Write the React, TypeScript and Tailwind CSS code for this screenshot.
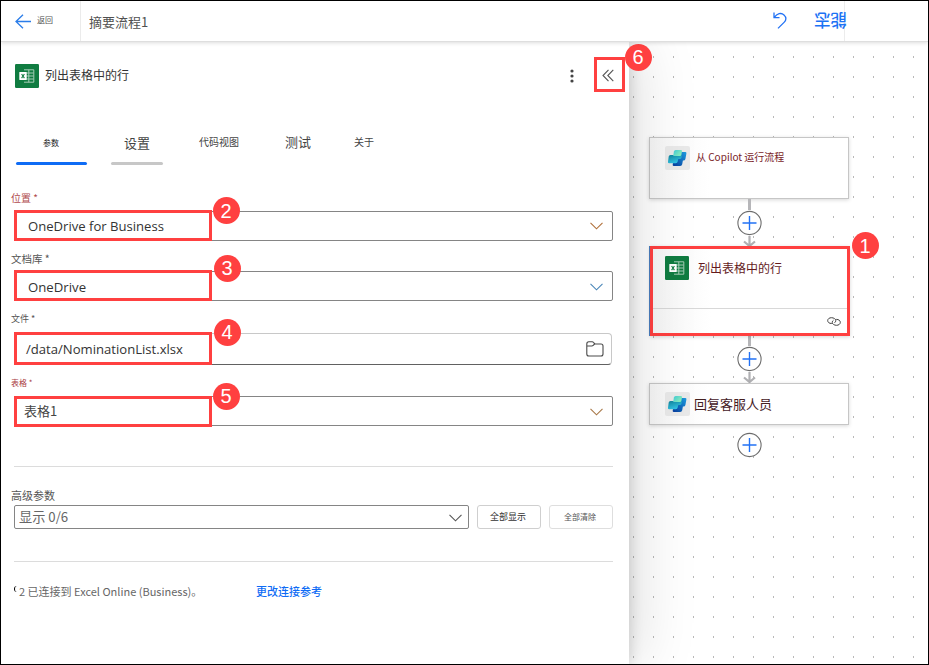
import React from "react";

const latin = "font-['Open_Sans','Noto_Sans_CJK_SC',sans-serif]";
const cjk = "font-['Noto_Sans_CJK_SC',sans-serif]";

function Chevron({ className = "" }: { className?: string }) {
  return (
    <svg className={className} width="13" height="8" viewBox="0 0 13 8" fill="none" stroke="currentColor" strokeWidth="1.1">
      <path d="M0.5 0.8 6.5 6.8 12.5 0.8" />
    </svg>
  );
}

function ExcelIcon() {
  return (
    <svg className="shrink-0" width="24" height="24" viewBox="0 0 24 24">
      <rect width="24" height="24" rx="1.2" fill="#107c41" />
      <path d="M9 5.800h9.800v12.400H9M8.500 9h10M8.500 12h10M8.500 15h10M13.800 5.800v12.400" fill="none" stroke="#b5d6c3" strokeWidth="0.9" />
      <rect x="4.300" y="8" width="7.400" height="8" rx="0.4" fill="#fff" />
      <path d="M6.600 10l2.800 4.100M9.400 10l-2.800 4.100" stroke="#107c41" strokeWidth="1.1" />
    </svg>
  );
}

function CopilotIcon() {
  return (
    <svg className="shrink-0" width="25" height="24" viewBox="0 0 25 24">
      <defs>
        <linearGradient id="mint" x1="0" y1="0" x2="1" y2="0.6">
          <stop offset="0" stopColor="#3fcbd8" />
          <stop offset="1" stopColor="#8deebb" />
        </linearGradient>
        <linearGradient id="teal" x1="0" y1="0" x2="0.5" y2="1">
          <stop offset="0" stopColor="#10829a" />
          <stop offset="1" stopColor="#33c7e8" />
        </linearGradient>
        <linearGradient id="blue" x1="0" y1="1" x2="1" y2="0">
          <stop offset="0" stopColor="#073b9c" />
          <stop offset="1" stopColor="#1d9de0" />
        </linearGradient>
      </defs>
      <rect width="25" height="24" rx="2" fill="#e9e9e9" />
      <path d="M14.500 6h5.700q1.500 0 1.200 1.400l-1 5.600q-.3 1.600-2 1.600h-.5l-.7 3.600q-.3 1.800-2 1.800H9q-1.500 0-1.300-1.300l.8-5z" fill="url(#blue)" />
      <path d="M5.500 9h11.500l-.4 2.400q-.3 1.600-1.800 1.600h-1.500l-.6 2.500q-.3 1.800-2 1.800H4.200q-1.500 0-1.200-1.500l.7-5.300q.2-1.500 1.800-1.500z" fill="url(#teal)" />
      <path d="M10.600 4h5.200q1.400 0 1.200 1.300l-.6 3.200q-.3 1.500-1.800 1.500H8.200l.7-4.500q.3-1.500 1.700-1.500z" fill="url(#mint)" />
    </svg>
  );
}

function Badge({ n, className }: { n: number; className: string }) {
  return (
    <span className={`absolute z-20 flex size-[27px] items-center justify-center rounded-full bg-[#ff4040] font-['Liberation_Sans',sans-serif] text-[20px] leading-none text-white ${className}`}>
      {n}
    </span>
  );
}

function Tab({ label, className, text, bar = "bg-transparent" }: { label: string; className: string; text: string; bar?: string }) {
  return (
    <div className={`flex h-[36px] flex-col items-center justify-between ${className}`}>
      <span className={`flex h-[27px] items-center whitespace-nowrap ${text}`}>{label}</span>
      <span className={`h-[3px] w-full rounded-full ${bar}`} />
    </div>
  );
}

interface FieldProps {
  label: string;
  labelClass: string;
  value: string;
  valueClass: string;
  n: number;
  box: string;
  badge: string;
  frame?: string;
  highlight?: string;
  children: React.ReactNode;
}

function Field({ label, labelClass, value, valueClass, n, box, badge, frame = "border-[#858585]", highlight = "-top-[2px] -bottom-[1px]", children }: FieldProps) {
  return (
    <div>
      <div className={`-ml-[3px] flex items-center whitespace-pre ${cjk} ${labelClass}`}>{label}</div>
      <div className={`relative flex items-center justify-between rounded-[2px] border ${box} ${frame}`}>
        <span className={`whitespace-nowrap ${valueClass}`}>{value}</span>
        {children}
        <span className={`absolute -left-[1px] w-[198px] border-[3px] border-[#ff4040] ${highlight}`} />
        <Badge n={n} className={badge} />
      </div>
    </div>
  );
}

function AddButton() {
  return (
    <svg className="shrink-0" width="25" height="26" viewBox="0 0 25 26" fill="none">
      <circle cx="12.500" cy="13" r="11.6" fill="#fff" stroke="#6c6c6c" strokeWidth="1.1" />
      <path d="M12.500 6v14M5.500 13h14" stroke="#2272f5" strokeWidth="1.4" />
    </svg>
  );
}

function Connector() {
  return (
    <div className="-mr-px flex h-[48px] flex-col items-center">
      <span className="h-[11px] w-[3px] bg-[#b6b6b9]" />
      <AddButton />
      <svg width="13" height="11" viewBox="0 0 13 11" fill="none" stroke="#b0b0b3" strokeWidth="2.200">
        <path d="M6.500 0v10M1 5.500 6.500 10 12 5.500" />
      </svg>
    </div>
  );
}

const card = "border border-[#c6c6c6] bg-white bg-linear-to-r from-[#f6f6f6] to-white to-30% shadow-[0_1px_4px_rgba(0,0,0,0.16)]";

export default function App() {
  return (
    <div className={`flex h-[665px] w-[929px] flex-col overflow-hidden border border-black bg-white ${latin}`}>
      <header className="relative z-30 flex h-[41px] shrink-0 items-center border-b border-[#dedede] bg-white shadow-[0_1px_4px_rgba(0,0,0,0.14)]">
        <div className="flex h-full w-[80px] items-center border-r border-[#ebebeb] pl-[14px]">
          <svg width="16" height="15" viewBox="0 0 16 15" fill="none" stroke="#2b7de9" strokeWidth="1.300">
            <path d="M16 7.500H1M8 .7 1 7.500 8 14.300" />
          </svg>
          <span className="-mt-[2px] ml-[6px] text-[8px] text-[#555]">返回</span>
        </div>
        <h1 className={`ml-[8px] flex-1 pt-px text-[13px] text-[#505050] ${cjk}`}>摘要流程1</h1>
        <svg className="-mt-[2px] mr-[27px]" width="14" height="17" viewBox="0 0 14 17" fill="none" stroke="#2272f5" strokeWidth="1.300">
          <path d="M1 .5v5.200h5.500M1.300 5.400C4 1.500 8.200.3 11 2.900c2.600 2.400 2.300 5.200.3 7.200L5 16.400" />
        </svg>
        <div className="flex h-full w-[31px] items-center border-r border-[#ececec] pb-[4px]">
          <span className="rotate-180 text-[16.500px] leading-none font-medium whitespace-nowrap text-[#1c72f4]">能志</span>
        </div>
        <div className="w-[83px]" />
      </header>

      <div className="flex min-h-0 flex-1">
        <section className="relative z-10 w-[628px] shrink-0 bg-white pt-[16px] pr-[16px] pl-[13px] shadow-[2px_0_12px_rgba(0,0,0,0.14),10px_0_56px_rgba(0,0,0,0.13)]">
          <div className="flex h-[35px] items-center pl-[1px]">
            <ExcelIcon />
            <h2 className="ml-[6px] flex-1 text-[12px] text-[#333]">列出表格中的行</h2>
            <svg className="mr-[20px]" width="4" height="14" viewBox="0 0 4 14" fill="#444">
              <circle cx="2" cy="2" r="1.600" />
              <circle cx="2" cy="7" r="1.600" />
              <circle cx="2" cy="12" r="1.600" />
            </svg>
            <div className="relative -mt-[2px] -mr-[12px] flex h-[35px] w-[31px] items-center justify-center border-[3px] border-[#ff4040]">
              <svg className="mt-[2px] -ml-[3px]" width="12" height="13" viewBox="0 0 12 13" fill="none" stroke="#555" strokeWidth="1.100">
                <path d="M6.500.8 1 6.500l5.500 5.700M11.300.8 5.800 6.500l5.500 5.700" />
              </svg>
              <Badge n={6} className="-top-[16.500px] -right-[29.500px]" />
            </div>
          </div>

          <nav className="mt-[36px] flex pl-[2px] text-[#444]">
            <Tab label="参数" className="w-[71px]" text="text-[8px] text-[#222] pr-px" bar="bg-[#0f6cf5]" />
            <Tab label="设置" className="ml-[24px] w-[52px]" text="text-[13px] pt-[2px]" bar="bg-[#c7c7c7]" />
            <Tab label="代码视图" className="ml-[36px] w-[40px]" text="text-[10px]" />
            <Tab label="测试" className="ml-[46px] w-[26px]" text="text-[13px]" />
            <Tab label="关于" className="ml-[43px] w-[20px]" text="text-[10px]" />
          </nav>

          <div className="pt-[22px]">
            <Field label="位置 *" labelClass="h-[24px] pb-[3px] text-[10px] text-[#b04a4e]" value="OneDrive for Business" valueClass="pl-[13px] pt-px text-[13.1px] text-[#333]" n={2} box="h-[30px]" badge="left-[197.500px] -top-[15px]">
              <Chevron className="mr-[9px] text-[#b0703a]" />
            </Field>
            <Field label="文档库 *" labelClass="h-[30px] pt-[6px] text-[10.500px] text-[#555]" value="OneDrive" valueClass="pl-[13px] pt-[3px] text-[13.200px] text-[#333]" n={3} box="h-[30px]" badge="left-[198.500px] -top-[17.500px]">
              <Chevron className="mt-px mr-[9px] text-[#4a86b8]" />
            </Field>
            <Field label="文件 *" labelClass="h-[32px] pt-[3px] text-[9px] text-[#555]" value="/data/NominationList.xlsx" valueClass="pl-[11px] pt-px text-[13.1px] text-[#333]" n={4} box="h-[32px] rounded-[4px] mr-[1px]" badge="left-[198.500px] -top-[15.500px]" frame="border-[#c8c8c8] border-b-[#616161]">
              <svg className="mr-[7px]" width="18" height="16" viewBox="0 0 18 16" fill="none" stroke="#4a4a4a" strokeWidth="1.100">
                <path d="M.8 3V13q0 2 2 2H15q2 0 2-2V5q0-2-2-2H9L7.300 1.300Q7 .8 6.200.8H2.800Q.8.800.8 3zM.8 5H5.800Q6.600 5 7.200 4.400L8.600 3" />
              </svg>
            </Field>
            <Field label="表格 *" labelClass="h-[31px] pt-[5px] text-[8px] text-[#a93a3e]" value="表格1" valueClass={`pl-[9px] text-[13px] text-[#444] ${cjk}`} n={5} box="h-[30px]" badge="left-[197.500px] -top-[14.500px]" highlight="-top-[1px] -bottom-[2px]">
              <Chevron className="mt-px mr-[9px] text-[#a87848]" />
            </Field>
          </div>

          <hr className="mt-[40px] border-[#dcdcdc]" />

          <div className="mt-[20px] -ml-[3px] flex h-[18px] items-center text-[11px] text-[#555]">高级参数</div>
          <div className="flex h-[24px] gap-[8px]">
            <div className={`flex w-[455px] items-center justify-between rounded-[2px] border border-[#858585] pr-[6px] pl-[4px] text-[13.200px] text-[#666] ${cjk}`}>
              <span>显示 0/6</span>
              <Chevron className="mt-[2px] text-[#555]" />
            </div>
            <button className="w-[64px] rounded-[3px] border border-[#cfcfcf] pr-[2px] text-[9px] text-[#333]">全部显示</button>
            <button className="w-[64px] rounded-[3px] border border-[#dedede] pr-[2px] text-[8px] text-[#555]">全部清除</button>
          </div>
          <hr className="mt-[32px] border-[#dcdcdc]" />

          <div className={`mt-[18px] flex h-[22px] items-center text-[11px] text-[#666] ${cjk}`}>
            <span className="flex w-[242px] items-center whitespace-nowrap">
              <i className="mr-[2px] mb-[4px] h-[6px] w-[3px] rounded-l-full border-l border-black" />
              2 已连接到 Excel Online (Business)。
            </span>
            <a className="pt-px font-medium text-[#0f6cf5]">更改连接参考</a>
          </div>
        </section>

        <main className="relative flex-1 bg-white">
          <svg className="absolute inset-0 size-full">
            <defs>
              <pattern id="dots" x="4" y="14" width="20" height="20" patternUnits="userSpaceOnUse">
                <rect width="1" height="2" fill="#b8b8b8" />
              </pattern>
            </defs>
            <rect width="100%" height="100%" fill="url(#dots)" />
          </svg>
          <div className="relative ml-[20px] flex w-[200px] flex-col pt-[95px]">
            <div className={`flex h-[62px] pt-[8px] pl-[15px] ${card}`}>
              <CopilotIcon />
              <span className={`mt-[3px] ml-[6px] text-[10px] text-[#7a2427] ${cjk}`}>从 Copilot 运行流程</span>
            </div>
            <Connector />
            <div className="relative -mt-px -mr-px ml-px flex h-[90px] flex-col border-[3px] border-[#ff4040] bg-white bg-linear-to-r from-[#f6f6f6] to-white to-30% shadow-[-1px_0_0_#4a7dbd,0_1px_4px_rgba(0,0,0,0.16)]">
              <div className="flex h-[60px] border-b border-[#d8d8d8] pt-[7px] pl-[12px]">
                <ExcelIcon />
                <span className="mt-[4px] ml-[9px] text-[12px] text-[#641a1c]">列出表格中的行</span>
              </div>
              <div className="flex flex-1 items-center justify-end pr-[6px]">
                <svg width="14" height="9" viewBox="0 0 14 9" fill="none" stroke="#444" strokeWidth="1">
                  <path d="M5.500 6.500H4.500C2.300 6.500.7 5.300.7 3.600S2.300.7 4.500.7s4.300 1.300 4.300 3c0 .8-.5 1.600-1.300 2.100M8.500 2.400h1c2.200 0 3.800 1.200 3.800 2.900S11.700 8.300 9.500 8.300 5.200 7 5.200 5.300c0-.8.5-1.600 1.300-2.100" />
                </svg>
              </div>
              <Badge n={1} className="-top-[17px] -right-[31.500px]" />
            </div>
            <div className="-mt-px">
              <Connector />
            </div>
            <div className={`flex h-[42px] pt-[8px] pl-[15px] ${card}`}>
              <CopilotIcon />
              <span className="mt-[3px] ml-[4px] text-[13px] text-[#44201f]">回复客服人员</span>
            </div>
            <div className="mt-[7px] -mr-px flex justify-center">
              <AddButton />
            </div>
          </div>
        </main>
      </div>
    </div>
  );
}
